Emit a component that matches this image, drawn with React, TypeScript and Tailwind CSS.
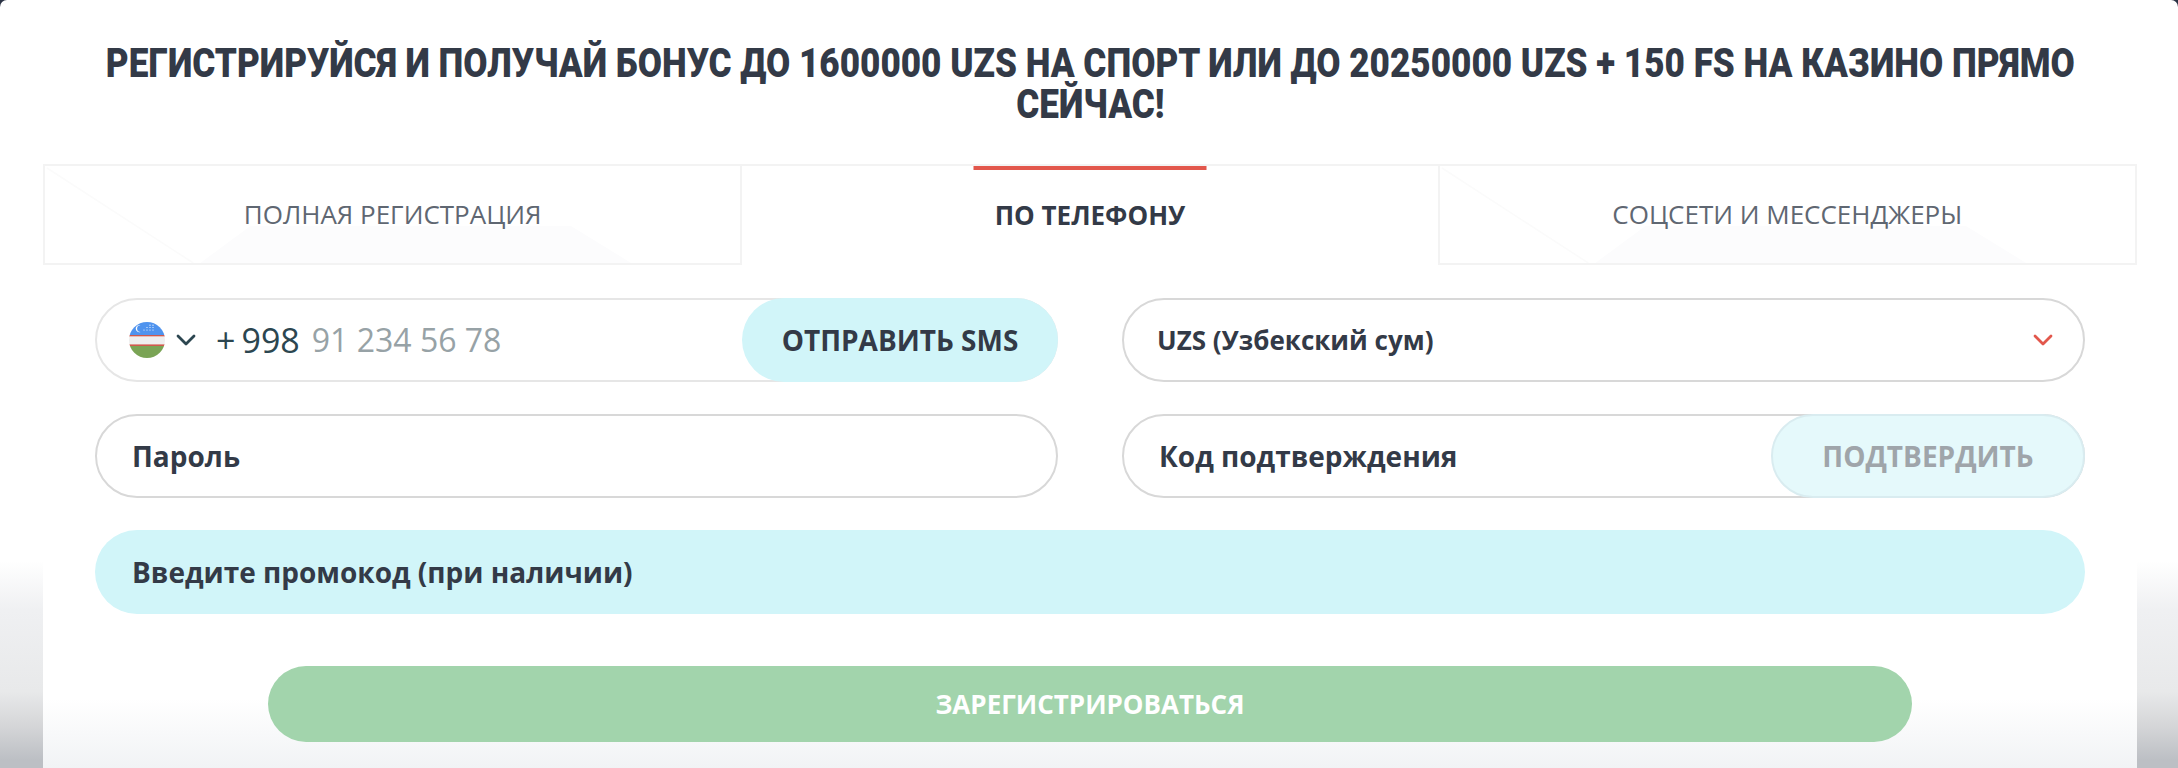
import React from "react";

const sans = "font-['Open_Sans',sans-serif]";

function Flag() {
  return (
    <svg width="36" height="36" viewBox="0 0 36 36" className="shrink-0">
      <defs>
        <clipPath id="flagClip">
          <circle cx="18" cy="18" r="18" />
        </clipPath>
      </defs>
      <g clipPath="url(#flagClip)">
        <rect width="36" height="13" fill="#4f93ee" />
        <rect y="13" width="36" height="1.6" fill="#cf5a4d" />
        <rect y="14.6" width="36" height="8" fill="#efefef" />
        <rect y="22.4" width="36" height="1.6" fill="#cf5a4d" />
        <rect y="24" width="36" height="12" fill="#7aa455" />
      </g>
      <path d="M11.5 3.2a3.6 3.6 0 1 0 0 6.8 3.1 3.1 0 1 1 0-6.8z" fill="#fff" />
      <g fill="#fff">
        <circle cx="15" cy="8" r=".6" />
        <circle cx="18" cy="8" r=".6" />
        <circle cx="21" cy="8" r=".6" />
        <circle cx="24" cy="8" r=".6" />
        <circle cx="18" cy="5.5" r=".6" />
        <circle cx="21" cy="5.5" r=".6" />
        <circle cx="24" cy="5.5" r=".6" />
        <circle cx="21" cy="3.2" r=".6" />
        <circle cx="24" cy="3.2" r=".6" />
      </g>
    </svg>
  );
}

function Chevron({ color, w }: { color: string; w: number }) {
  return (
    <svg width={w} height={(w * 12) / 20} viewBox="0 0 20 12" fill="none" className="shrink-0">
      <path d="M2 2 10 10 18 2" stroke={color} strokeWidth="2.8" strokeLinecap="round" strokeLinejoin="round" />
    </svg>
  );
}

function Tab({ label, active }: { label: string; active?: boolean }) {
  if (active) {
    return (
      <div className="relative flex h-[101px] flex-1 items-center justify-center border-t-2 border-[#f3f3f3] bg-white">
        <div className="absolute left-1/2 top-0 h-1 w-[233px] -translate-x-1/2 bg-[#e2574c]" />
        <span className="text-[26px] font-bold text-[#333a47]">{label}</span>
      </div>
    );
  }
  return (
    <div className="relative flex h-[101px] flex-1 items-center justify-center border-2 border-[#f3f3f3] bg-white">
      <svg className="absolute inset-0 h-full w-full" viewBox="0 0 694 97" preserveAspectRatio="none" fill="none">
        <path d="M155 97 585 97 525 60 205 60Z" fill="#fcfcfd" />
        <path d="M2 2 148 97" stroke="#fbfbfb" strokeWidth="1.5" />
      </svg>
      <span className="relative text-[26px] text-[#5f6772]">{label}</span>
    </div>
  );
}

export default function App() {
  return (
    <div className="h-[768px] w-full overflow-hidden bg-[#2b3345]">
      <div
        className={`h-full w-full overflow-hidden rounded-t-[7px] bg-[linear-gradient(to_bottom,#ffffff_73%,#eff0f2_79.5%,#e8e9ea_90%,#d5d6d8_94.5%,#bcbfc4_99%)] pl-[43px] pr-[41px] ${sans}`}
      >
        <div className="flex h-full flex-col bg-gradient-to-b from-white from-[91%] to-[#f1f3f5]">
          <h1 className="flex flex-col items-center pt-[43px] font-['Roboto',sans-serif] text-[40px] font-black leading-[41px] text-[#333a47]">
            <span className="scale-x-[0.878] whitespace-nowrap">
              РЕГИСТРИРУЙСЯ И ПОЛУЧАЙ БОНУС ДО 1600000 UZS НА СПОРТ ИЛИ ДО 20250000 UZS + 150 FS НА КАЗИНО ПРЯМО
            </span>
            <span className="scale-x-[0.878] whitespace-nowrap">СЕЙЧАС!</span>
          </h1>

          <div className="mt-[39px] flex">
            <Tab label="ПОЛНАЯ РЕГИСТРАЦИЯ" />
            <Tab label="ПО ТЕЛЕФОНУ" active />
            <Tab label="СОЦСЕТИ И МЕССЕНДЖЕРЫ" />
          </div>

          <div className="mt-[33px] grid grid-cols-[963px_963px] gap-x-[64px] gap-y-[32px] pl-[52px]">
            <div className="flex h-[84px] items-center rounded-full border-2 border-[#e6e6e6] bg-white">
              <div className="ml-[32px] flex items-center gap-[11px]">
                <Flag />
                <Chevron color="#2c4650" w={20} />
              </div>
              <span className="ml-[20px] text-[34px] leading-none text-[#2c4650]">
                <span className="mr-[6px]">+</span>998
              </span>
              <span className="ml-[12px] text-[32px] leading-none text-[#97a2a6]">91 234 56 78</span>
              <button className="-mr-[2px] ml-auto flex h-[84px] w-[316px] items-center justify-center rounded-full bg-[#d1f5f9] text-[28px] font-bold text-[#333a47]">
                ОТПРАВИТЬ SMS
              </button>
            </div>

            <div className="flex h-[84px] items-center justify-between rounded-full border-2 border-[#d8d8d8] bg-white pl-[33px] pr-[30px]">
              <span className="text-[26px] font-bold text-[#333a47]">UZS (Узбекский сум)</span>
              <Chevron color="#e2574c" w={20} />
            </div>

            <div className="flex h-[84px] items-center rounded-full border-2 border-[#d8d8d8] bg-white pl-[35px]">
              <span className="text-[28px] font-bold text-[#333a47]">Пароль</span>
            </div>

            <div className="flex h-[84px] items-center rounded-full border-2 border-[#d8d8d8] bg-white pl-[35px]">
              <span className="text-[28px] font-bold text-[#333a47]">Код подтверждения</span>
              <button className="-mr-[2px] ml-auto flex h-[84px] w-[314px] items-center justify-center rounded-full border-2 border-[#d9ecf0] bg-[#e5f9fb] text-[28px] font-bold text-[#9fa5aa]">
                ПОДТВЕРДИТЬ
              </button>
            </div>

            <div className="col-span-2 flex h-[84px] items-center rounded-full bg-[#d1f5f9] pl-[37px]">
              <span className="text-[28px] font-bold text-[#333a47]">Введите промокод (при наличии)</span>
            </div>
          </div>

          <button className="mx-auto mt-[52px] flex h-[76px] w-[1644px] shrink-0 items-center justify-center rounded-full bg-[#a2d4ac] text-[26px] font-bold text-white">
            ЗАРЕГИСТРИРОВАТЬСЯ
          </button>
        </div>
      </div>
    </div>
  );
}
